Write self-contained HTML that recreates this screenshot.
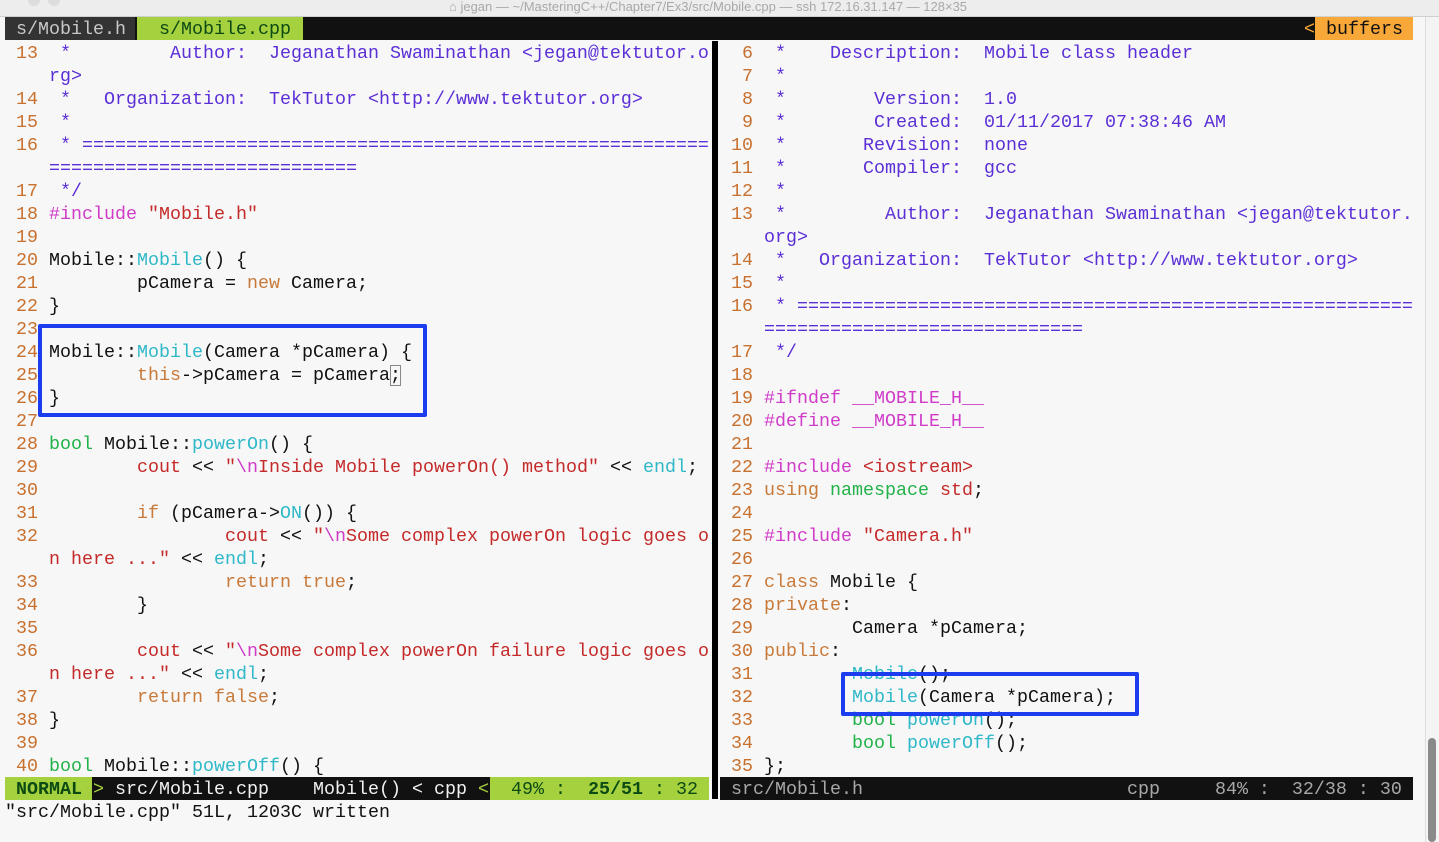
<!DOCTYPE html>
<html><head><meta charset="utf-8"><style>
body{margin:0;width:1439px;height:842px;background:#f7f7f7;overflow:hidden;position:relative;font-family:"Liberation Mono",monospace}
.title{position:absolute;left:0;top:0;width:1439px;height:16px;background:#ededed;border-bottom:1px solid #d0d0d0}
.title span{position:absolute;left:449px;top:0;font:13px/14px "Liberation Sans",sans-serif;color:#a8a8a8;white-space:nowrap}
.dot{position:absolute;top:-6px;width:12px;height:12px;border-radius:6px;background:#ddd}
pre{margin:0;position:absolute;font-size:18.33px;line-height:23px;font-family:"Liberation Mono",monospace;color:#111;white-space:pre}
.ln{color:#c8702e}.cm{color:#5b2fd6}.pp{color:#d03cc8}.st{color:#c42a2a}.kw{color:#c87a3a}.ty{color:#22b24a}.fn{color:#2fb8c8}.sp{color:#d03cc8}
.bar{position:absolute;height:23px}
.box{position:absolute;border:4px solid #1c3cf0;border-radius:2px}
</style></head><body>
<div class="title"><div class="dot" style="left:28px"></div><div class="dot" style="left:48px"></div><span>⌂ jegan — ~/MasteringC++/Chapter7/Ex3/src/Mobile.cpp — ssh 172.16.31.147 — 128×35</span></div>
<div class="bar" style="left:5px;top:17px;width:1408px;background:#111"></div>
<div class="bar" style="left:5px;top:17px;width:130px;background:#333"></div>
<div class="bar" style="left:137px;top:17px;width:166px;background:#a6d13e"></div>
<div class="bar" style="left:1315px;top:17px;width:98px;background:#f8a838"></div>
<pre style="left:16px;top:18px;color:#c8c8c8">s/Mobile.h</pre>
<pre style="left:159px;top:18px;color:#0c4a14">s/Mobile.cpp</pre>
<pre style="left:1304px;top:18px;color:#f8a838">&lt;</pre>
<pre style="left:1326px;top:18px;color:#111">buffers</pre>

<pre style="left:5px;top:42px"><span class="ln"> 13 </span><span class="cm"> *         Author:  Jeganathan Swaminathan &lt;jegan@tektutor.o</span>
<span class="cm">    rg&gt;</span>
<span class="ln"> 14 </span><span class="cm"> *   Organization:  TekTutor &lt;http://www.tektutor.org&gt;</span>
<span class="ln"> 15 </span><span class="cm"> *</span>
<span class="ln"> 16 </span><span class="cm"> * =========================================================</span>
<span class="cm">    ============================</span>
<span class="ln"> 17 </span><span class="cm"> */</span>
<span class="ln"> 18 </span><span class="pp">#include</span> <span class="st">"Mobile.h"</span>
<span class="ln"> 19 </span>
<span class="ln"> 20 </span>Mobile::<span class="fn">Mobile</span>() {
<span class="ln"> 21 </span>        pCamera = <span class="kw">new</span> Camera;
<span class="ln"> 22 </span>}
<span class="ln"> 23 </span>
<span class="ln"> 24 </span>Mobile::<span class="fn">Mobile</span>(Camera *pCamera) {
<span class="ln"> 25 </span>        <span class="kw">this</span>-&gt;pCamera = pCamera<span style="outline:1px solid #888;outline-offset:-1px">;</span>
<span class="ln"> 26 </span>}
<span class="ln"> 27 </span>
<span class="ln"> 28 </span><span class="ty">bool</span> Mobile::<span class="fn">powerOn</span>() {
<span class="ln"> 29 </span>        <span class="st">cout</span> &lt;&lt; <span class="st">"</span><span class="sp">\n</span><span class="st">Inside Mobile powerOn() method"</span> &lt;&lt; <span class="fn">endl</span>;
<span class="ln"> 30 </span>
<span class="ln"> 31 </span>        <span class="kw">if</span> (pCamera-&gt;<span class="fn">ON</span>()) {
<span class="ln"> 32 </span>                <span class="st">cout</span> &lt;&lt; <span class="st">"</span><span class="sp">\n</span><span class="st">Some complex powerOn logic goes o</span>
    <span class="st">n here ..."</span> &lt;&lt; <span class="fn">endl</span>;
<span class="ln"> 33 </span>                <span class="kw">return</span> <span class="kw">true</span>;
<span class="ln"> 34 </span>        }
<span class="ln"> 35 </span>
<span class="ln"> 36 </span>        <span class="st">cout</span> &lt;&lt; <span class="st">"</span><span class="sp">\n</span><span class="st">Some complex powerOn failure logic goes o</span>
    <span class="st">n here ..."</span> &lt;&lt; <span class="fn">endl</span>;
<span class="ln"> 37 </span>        <span class="kw">return</span> <span class="kw">false</span>;
<span class="ln"> 38 </span>}
<span class="ln"> 39 </span>
<span class="ln"> 40 </span><span class="ty">bool</span> Mobile::<span class="fn">powerOff</span>() {</pre>

<div style="position:absolute;left:712px;top:41px;width:6px;height:758px;background:#000"></div>

<pre style="left:720px;top:42px"><span class="ln">  6 </span><span class="cm"> *    Description:  Mobile class header</span>
<span class="ln">  7 </span><span class="cm"> *</span>
<span class="ln">  8 </span><span class="cm"> *        Version:  1.0</span>
<span class="ln">  9 </span><span class="cm"> *        Created:  01/11/2017 07:38:46 AM</span>
<span class="ln"> 10 </span><span class="cm"> *       Revision:  none</span>
<span class="ln"> 11 </span><span class="cm"> *       Compiler:  gcc</span>
<span class="ln"> 12 </span><span class="cm"> *</span>
<span class="ln"> 13 </span><span class="cm"> *         Author:  Jeganathan Swaminathan &lt;jegan@tektutor.</span>
<span class="cm">    org&gt;</span>
<span class="ln"> 14 </span><span class="cm"> *   Organization:  TekTutor &lt;http://www.tektutor.org&gt;</span>
<span class="ln"> 15 </span><span class="cm"> *</span>
<span class="ln"> 16 </span><span class="cm"> * ========================================================</span>
<span class="cm">    =============================</span>
<span class="ln"> 17 </span><span class="cm"> */</span>
<span class="ln"> 18 </span>
<span class="ln"> 19 </span><span class="pp">#ifndef __MOBILE_H__</span>
<span class="ln"> 20 </span><span class="pp">#define __MOBILE_H__</span>
<span class="ln"> 21 </span>
<span class="ln"> 22 </span><span class="pp">#include</span> <span class="st">&lt;iostream&gt;</span>
<span class="ln"> 23 </span><span class="kw">using</span> <span class="ty">namespace</span> <span class="st">std</span>;
<span class="ln"> 24 </span>
<span class="ln"> 25 </span><span class="pp">#include</span> <span class="st">"Camera.h"</span>
<span class="ln"> 26 </span>
<span class="ln"> 27 </span><span class="kw">class</span> Mobile {
<span class="ln"> 28 </span><span class="kw">private</span>:
<span class="ln"> 29 </span>        Camera *pCamera;
<span class="ln"> 30 </span><span class="kw">public</span>:
<span class="ln"> 31 </span>        <span class="fn">Mobile</span>();
<span class="ln"> 32 </span>        <span class="fn">Mobile</span>(Camera *pCamera);
<span class="ln"> 33 </span>        <span class="ty">bool</span> <span class="fn">powerOn</span>();
<span class="ln"> 34 </span>        <span class="ty">bool</span> <span class="fn">powerOff</span>();
<span class="ln"> 35 </span>};</pre>

<div class="box" style="left:38px;top:324px;width:381px;height:85px"></div>
<div class="box" style="left:841px;top:672px;width:290px;height:36px"></div>

<div class="bar" style="left:5px;top:777px;width:704px;background:#111"></div>
<div class="bar" style="left:5px;top:777px;width:87px;background:#a6d13e"></div>
<div class="bar" style="left:490px;top:777px;width:219px;background:#a6d13e"></div>
<div class="bar" style="left:720px;top:777px;width:693px;background:#111"></div>
<pre style="left:16px;top:778px;color:#0c4a14;font-weight:bold">NORMAL</pre>
<pre style="left:93px;top:778px;color:#a6d13e">&gt;</pre>
<pre style="left:115px;top:778px;color:#f0f0f0">src/Mobile.cpp    Mobile() &lt; cpp</pre>
<pre style="left:478px;top:778px;color:#a6d13e">&lt;</pre>
<pre style="left:500px;top:778px;color:#0c4a14"> 49% :  <b>25/51</b> : 32</pre>
<pre style="left:731px;top:778px;color:#a8a8a8">src/Mobile.h                        cpp     84% :  32/38 : 30</pre>
<pre style="left:5px;top:801px">"src/Mobile.cpp" 51L, 1203C written</pre>

<div style="position:absolute;left:1425px;top:17px;width:14px;height:825px;background:#f4f4f4;border-left:1px solid #ddd"></div>
<div style="position:absolute;left:1428px;top:738px;width:8px;height:104px;background:#8a8a8a;border-radius:4px"></div>
</body></html>
